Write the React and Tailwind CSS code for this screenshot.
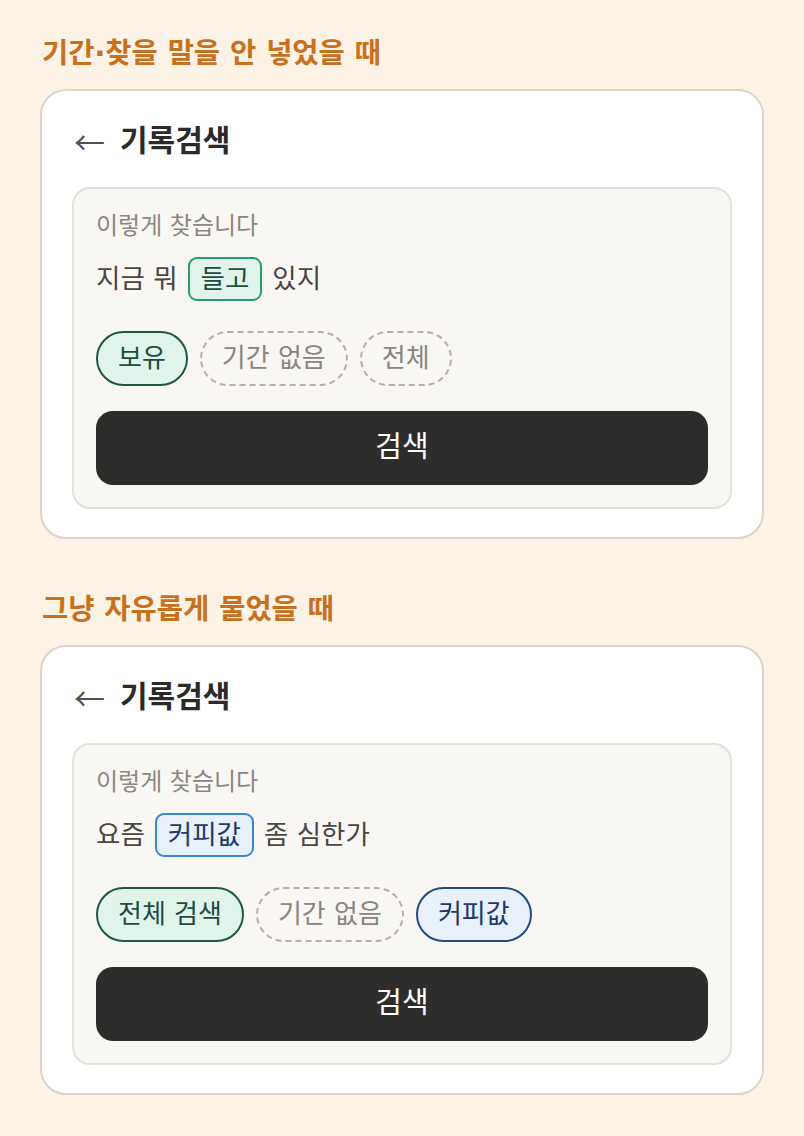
import React from "react";

const font = { fontFamily: '"DejaVu Sans", "Noto Sans CJK KR", sans-serif' };
const cjk = { fontFamily: '"Noto Sans CJK KR", sans-serif' };

function Chip({ children, kind }) {
  const cls =
    kind === "green"
      ? "border-[#2a9b76] bg-[#e1f4ec] text-[#1b4f3f]"
      : "border-[#3a86d6] bg-[#e7f0fb] text-[#1d3c66]";
  return (
    <span className={`mx-[10px] inline-flex h-[44px] items-center rounded-[9px] border-2 px-[11px] ${cls}`}>
      {children}
    </span>
  );
}

function Pill({ children, kind }) {
  const cls =
    kind === "green"
      ? "border-solid border-[#1e5745] bg-[#e1f4ec] text-[#1b4f3f]"
      : kind === "blue"
      ? "border-solid border-[#1f4c85] bg-[#e7f0fb] text-[#1d3a66]"
      : "border-dashed border-[#b5b0a8] text-[#8a857e]";
  return (
    <span className={`inline-flex h-[55px] items-center rounded-full border-2 px-[20px] text-[26px] ${cls}`}>
      {children}
    </span>
  );
}

function Card({ sentence, pills }) {
  return (
    <div className="rounded-[26px] border-2 border-[#dbd4c9] bg-white px-[30px] pb-[28px] pt-[30px]">
      <div className="mb-[27px] flex h-[39px] items-center">
        <span className="ml-[2px] mr-[15px] text-[31px] leading-none text-[#555350]" style={cjk}>
          ←
        </span>
        <span className="text-[30px] font-bold text-[#2b2a28]">기록검색</span>
      </div>
      <div className="rounded-[18px] border-2 border-[#e4e1d9] bg-[#f9f7f3] px-[22px] pb-[22px] pt-[22px]">
        <div className="h-[30px] text-[24px] leading-[30px] text-[#8c877f]">이렇게 찾습니다</div>
        <div className="mt-[16px] flex h-[44px] items-center text-[26.5px] text-[#4a4640]">{sentence}</div>
        <div className="mt-[30px] flex gap-[12px]">{pills}</div>
        <div className="mt-[25px] flex h-[74px] items-center justify-center rounded-[17px] bg-[#2d2d2b] text-[29px] text-white">
          검색
        </div>
      </div>
    </div>
  );
}

export default function App() {
  return (
    <div className="min-h-[1136px] w-[804px] bg-[#fdf2e6] px-[40px] pt-[36px]" style={font}>
      <h2 className="mb-[17px] pl-[2px] text-[28.5px] font-bold leading-[36px] text-[#c8711c]">기간·찾을 말을 안 넣었을 때</h2>
      <Card
        sentence={
          <>
            <span>지금 뭐</span>
            <Chip kind="green">들고</Chip>
            <span>있지</span>
          </>
        }
        pills={
          <>
            <Pill kind="green">보유</Pill>
            <Pill>기간 없음</Pill>
            <Pill>전체</Pill>
          </>
        }
      />
      <h2 className="mb-[17px] mt-[53px] pl-[2px] text-[28.5px] font-bold leading-[36px] text-[#c8711c]">그냥 자유롭게 물었을 때</h2>
      <Card
        sentence={
          <>
            <span>요즘</span>
            <Chip kind="blue">커피값</Chip>
            <span>좀 심한가</span>
          </>
        }
        pills={
          <>
            <Pill kind="green">전체 검색</Pill>
            <Pill>기간 없음</Pill>
            <Pill kind="blue">커피값</Pill>
          </>
        }
      />
    </div>
  );
}
